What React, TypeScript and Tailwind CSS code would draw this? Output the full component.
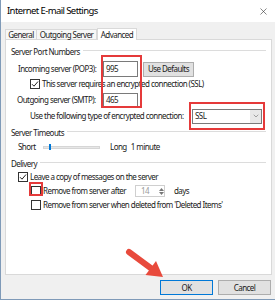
import { ChevronDown, X } from 'lucide-react';

function CheckBox({ checked }: { checked?: boolean }) {
  return (
    <div className="w-[10px] h-[10px] border border-[#333] bg-white flex items-center justify-center shrink-0">
      {checked && (
        <svg width="8" height="8" viewBox="0 0 8 8">
          <path d="M1 4.2 L3 6.2 L7 1.5" fill="none" stroke="#222" strokeWidth="1" />
        </svg>
      )}
    </div>
  );
}

function GroupHeader({ title }: { title: string }) {
  return (
    <div className="h-[12px] flex items-center pl-[5px] pr-[5px] gap-[3px]">
      <span>{title}</span>
      <div className="flex-1 h-px bg-[#dcdcdc] mt-[-3px]" />
    </div>
  );
}

export default function App() {
  return (
    <div
      className="w-[275px] h-[300px] bg-[#f0f0f0] relative overflow-hidden border-l border-b border-[#7f9ab8] text-[#1a1a1a] text-[8px] tracking-[-0.55px] leading-none whitespace-nowrap"
      style={{ fontFamily: '"Noto Sans", "Open Sans", sans-serif' }}
    >
      {/* title bar */}
      <div className="h-[22px] bg-white flex items-center justify-between pl-[6px] pr-[6px]">
        <span className="text-[9.5px] tracking-[-0.6px] text-black">Internet E-mail Settings</span>
        <X className="w-[11px] h-[11px] text-[#333]" strokeWidth={1.3} />
      </div>

      {/* tabs */}
      <div className="h-[17px] flex items-end pl-[4px] pt-[5px]">
        <div className="w-[32px] h-[10px] border border-b-0 border-[#d9d9d9] bg-[#f7f7f7] flex items-center justify-center">General</div>
        <div className="w-[60px] h-[10px] border border-b-0 border-l-0 border-[#d9d9d9] bg-[#f7f7f7] flex items-center justify-center">Outgoing Server</div>
        <div className="w-[40px] h-[12px] border border-b-0 border-[#d9d9d9] bg-white flex items-center justify-center relative top-px z-10">Advanced</div>
      </div>

      {/* panel */}
      <div className="ml-[4px] mr-[3px] h-[236px] bg-white border border-[#d9d9d9] flex flex-col pt-[6px]">
        <GroupHeader title="Server Port Numbers" />

        <div className="h-[18px] mt-[2px] flex items-center pl-[12px]">
          <span className="w-[85px]">Incoming server (POP3):</span>
          <div className="w-[35px] h-[16px] border border-[#7a7a7a] flex items-center pl-[2px]">995</div>
          <div className="ml-[5px] w-[51px] h-[15px] bg-[#e1e1e1] border border-[#adadad] flex items-center justify-center">Use Defaults</div>
        </div>

        <div className="h-[12px] flex items-center gap-[2px] pl-[24px]">
          <CheckBox checked />
          <span>This server requires an encrypted connection (SSL)</span>
        </div>

        <div className="h-[18px] mt-px flex items-center pl-[11px]">
          <span className="w-[86px]">Outgoing server (SMTP):</span>
          <div className="w-[35px] h-[15px] border border-[#7a7a7a] flex items-center pl-[2px]">465</div>
        </div>

        <div className="h-[14px] flex items-center pl-[24px]">
          <span className="w-[162px]">Use the following type of encrypted connection:</span>
          <div className="w-[70px] h-[15px] border border-[#7a7a7a] flex items-center justify-between pl-[2px]">
            <span>SSL</span>
            <div className="w-[11px] h-full bg-[#e8e8e8] flex items-center justify-center">
              <ChevronDown className="w-[8px] h-[8px] text-[#555]" strokeWidth={1.5} />
            </div>
          </div>
        </div>

        <div className="mt-[4px]">
          <GroupHeader title="Server Timeouts" />
        </div>

        <div className="h-[14px] mt-px flex items-center pl-[12px]">
          <span className="w-[25px]">Short</span>
          <div className="w-[57px] h-[3px] bg-[#e7e7e7] border border-[#d6d6d6] relative flex items-center">
            <div className="absolute left-[5px] w-[2px] h-[6px] bg-[#0078d7]" />
          </div>
          <span className="ml-[10px]">Long</span>
          <span className="ml-[4px]">1 minute</span>
        </div>

        <div className="mt-[4px]">
          <GroupHeader title="Delivery" />
        </div>

        <div className="h-[14px] flex items-center gap-[2px] pl-[12px]">
          <CheckBox checked />
          <span>Leave a copy of messages on the server</span>
        </div>

        <div className="h-[14px] flex items-center pl-[25px]">
          <CheckBox />
          <span className="ml-[2px] w-[92px]">Remove from server after</span>
          <div className="w-[30px] h-[12px] border border-[#cfcfcf] flex items-center justify-between pl-[5px] text-[#9a9a9a]">
            <span>14</span>
            <div className="w-[6px] h-full flex flex-col items-center justify-center gap-[1px]">
              <svg width="5" height="3" viewBox="0 0 5 3"><path d="M0 3 L2.5 0 L5 3 Z" fill="#777" /></svg>
              <svg width="5" height="3" viewBox="0 0 5 3"><path d="M0 0 L2.5 3 L5 0 Z" fill="#777" /></svg>
            </div>
          </div>
          <span className="ml-[9px]">days</span>
        </div>

        <div className="h-[14px] flex items-center gap-[2px] pl-[25px]">
          <CheckBox />
          <span>Remove from server when deleted from 'Deleted Items'</span>
        </div>
      </div>

      {/* buttons */}
      <div className="flex justify-end gap-[5px] pr-[4px] mt-[5px]">
        <div className="w-[53px] h-[15px] bg-[#e1e1e1] border border-[#0078d7] flex items-center justify-center">OK</div>
        <div className="w-[53px] h-[15px] bg-[#e1e1e1] border border-[#adadad] flex items-center justify-center">Cancel</div>
      </div>

      {/* annotations */}
      <div className="absolute left-[100px] top-[55px] w-[41px] h-[53px] border-2 border-[#e53a3a]" />
      <div className="absolute left-[188px] top-[102px] w-[76px] h-[28px] border-2 border-[#e53a3a]" />
      <div className="absolute left-[28px] top-[182px] w-[14px] h-[14px] border-2 border-[#e53a3a]" />
      <svg className="absolute left-0 top-0" width="275" height="300" viewBox="0 0 275 300">
        <line x1="128" y1="252" x2="151" y2="269" stroke="#e84a3c" strokeWidth="6" strokeLinecap="round" />
        <path d="M162 277 L144.5 275 L155 261 Z" fill="#e84a3c" />
      </svg>
    </div>
  );
}
